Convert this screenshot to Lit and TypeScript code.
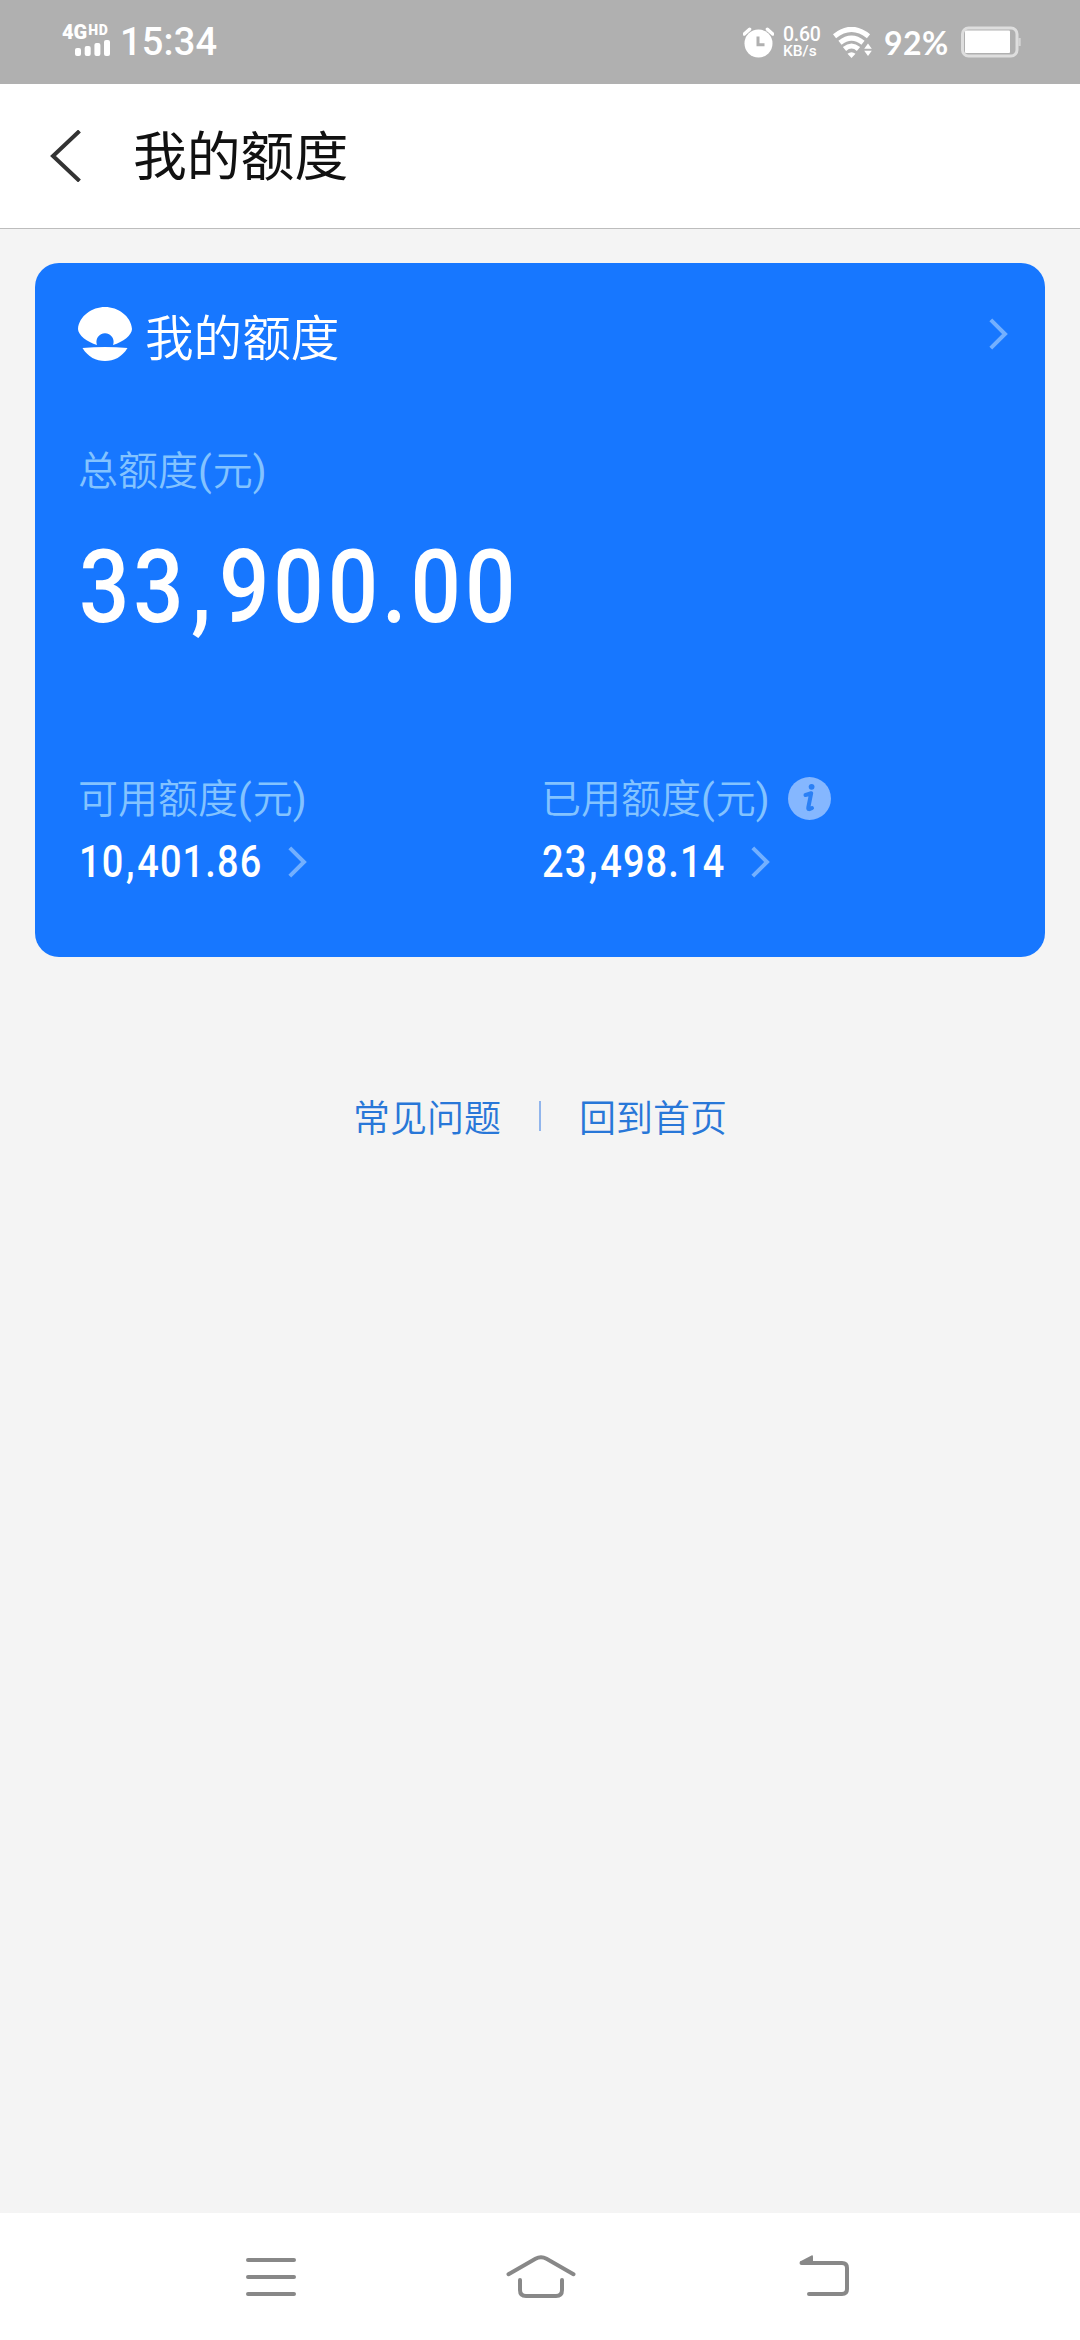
import { LitElement, html, css } from "lit";
import { customElement, property } from "lit/decorators.js";

@customElement("chevron-icon")
class ChevronIcon extends LitElement {
  static styles = css`
    :host { display: block; width: 19px; height: 32px; }
    svg { display: block; }
  `;
  render() {
    return html`<svg width="19" height="32" viewBox="0 0 19 32" fill="none">
      <path d="M1.8 1.8 L16 16 L1.8 30.2" stroke="#73b0ff" stroke-width="4" />
    </svg>`;
  }
}

@customElement("money-amount")
class MoneyAmount extends LitElement {
  @property() value = "";
  static styles = css`
    :host { display: block; white-space: nowrap; letter-spacing: 0.03em; }
    .digits {
      display: block;
      width: max-content;
      font-family: Roboto, "Liberation Sans", sans-serif;
      font-weight: 550;
      line-height: 1;
      transform: scaleX(0.87);
      transform-origin: 0 50%;
    }
    .comma { margin-left: 0.04em; margin-right: 0.045em; }
  `;
  render() {
    const [head, tail] = this.value.split(",");
    return html`<span class="digits">${head}<span class="comma">,</span>${tail}</span>`;
  }
}

@customElement("status-bar")
class StatusBar extends LitElement {
  static styles = css`
    :host {
      display: flex; height: 84px; background: #b0b0b0; color: #fff;
      font-family: Roboto, sans-serif; box-sizing: border-box; padding-left: 62px;
    }
    svg { display: block; flex: none; }
    .signal { width: 50px; padding-top: 24px; }
    .net { display: flex; align-items: flex-start; height: 16px; font-weight: 900; line-height: 16px; font-size: 20px; }
    .hd { margin-left: 1px; font-size: 14px; line-height: 12px; letter-spacing: 0.6px; font-weight: 900; }
    .bars { margin: 0 0 0 13px; }
    .time { width: 630px; padding-left: 8px; font-size: 38px; line-height: 85px; font-weight: 500; letter-spacing: 0.2px; }
    .alarm { margin: 27px 9px 0 -7px; }
    .speed { width: 50px; padding-top: 25px; font-weight: 500; }
    .rate { font-size: 19.5px; line-height: 19px; letter-spacing: -0.3px; }
    .unit { font-size: 15.5px; line-height: 15px; }
    .wifi { margin-top: 27px; }
    .pct { width: 77px; padding-left: 11px; font: 700 32px/86px Lato, sans-serif; letter-spacing: 0.4px; box-sizing: border-box; width: 88px; }
    .battery { margin-top: 26px; }
  `;
  render() {
    return html`
      <div class="signal">
        <div class="net"><span>4G</span><span class="hd">HD</span></div>
        <svg class="bars" width="36" height="16" viewBox="0 0 36 16" fill="#fff">
          <rect x="0" y="8" width="6" height="8" rx="2" /><rect x="9.7" y="6" width="6" height="10" rx="2" />
          <rect x="19.4" y="3" width="6" height="13" rx="2" /><rect x="29" y="0" width="6" height="16" rx="2" />
        </svg>
      </div>
      <div class="time">15:34</div>
      <svg class="alarm" width="31" height="31" viewBox="0 0 31 31">
        <circle cx="15.5" cy="16.5" r="14" fill="#fff" />
        <path d="M1.3 7 L6.6 2.2 M29.7 7 L24.4 2.2" stroke="#fff" stroke-width="3.4" stroke-linecap="round" />
        <path d="M15 9.5 V17.7 H21.5" fill="none" stroke="#b0b0b0" stroke-width="3" />
      </svg>
      <div class="speed"><div class="rate">0.60</div><div class="unit">KB/s</div></div>
      <svg class="wifi" width="40" height="32" viewBox="0 0 40 32">
        <g fill="none" stroke="#fff" stroke-width="5">
          <path d="M1.5 9.2 Q18.5 -4.6 35.5 9.2" /><path d="M7 15.8 Q18.5 6.4 30 15.8" /><path d="M11.5 22 Q18.5 16 25.5 22" />
        </g>
        <path d="M14.5 26.8 Q18.5 23.6 22.5 26.8 L18.5 31 Z M35 16.5 L38.8 21.8 H31.2 Z M35 29 L31.2 23.8 H38.8 Z" fill="#fff" />
      </svg>
      <div class="pct">92%</div>
      <svg class="battery" width="60" height="32" viewBox="0 0 60 32">
        <rect x="1.5" y="2" width="54.5" height="28" rx="6" fill="none" stroke="#dedede" stroke-width="3" />
        <rect x="4" y="4.5" width="45" height="22.5" rx="1" fill="#fff" />
        <path d="M58.5 12 V20" stroke="#d4d4d4" stroke-width="2.4" />
      </svg>`;
  }
}

@customElement("app-root")
class AppRoot extends LitElement {
  static styles = css`
    :host {
      display: flex; flex-direction: column; width: 1080px; height: 2340px;
      background: #f4f4f4; overflow: hidden;
      font-family: "Noto Sans CJK SC", sans-serif;
    }
    svg { display: block; flex: none; }
    .header {
      display: flex; align-items: center; height: 144px; padding-left: 50px;
      background: #fff; border-bottom: 1px solid #bdbdbd;
    }
    .title { margin: 0 0 7px 51px; font-size: 53.8px; line-height: 80px; color: #111; }
    .card {
      display: flex; flex-direction: column; box-sizing: border-box;
      margin: 34px 35px 0; height: 694px; padding: 43px 37px 0 43px;
      border-radius: 24px; background: #1777ff; color: #fff;
    }
    .card-head { display: flex; align-items: center; height: 56px; }
    .card-title { margin: 2px auto 0 13px; font-size: 48.6px; line-height: 60px; font-weight: 350; }
    .label { display: flex; align-items: center; font-size: 40px; line-height: 48px; height: 48px; font-weight: 350; color: #83c3ff; }
    .latin { font-family: Roboto, sans-serif; font-weight: 400; letter-spacing: 1px; }
    .total-label { margin-top: 84px; }
    .total { margin: 42px 0 0 1px; height: 102px; font-size: 102px; letter-spacing: 0.044em; }
    .columns { display: grid; grid-template-columns: 463px 1fr; margin-top: 136px; }
    .line { display: flex; align-items: center; height: 44px; margin-top: 18px; }
    .sum { box-sizing: border-box; width: 210px; height: 44px; padding: 1px 0 0 1px; font-size: 43.6px; }
    .info { margin-left: 17px; }
    .links { display: flex; align-items: center; justify-content: center; margin-top: 133px; height: 52px; font-size: 37px; line-height: 52px; font-weight: 350; color: #2877d8; }
    .rule { width: 2px; height: 30px; margin: 0 38px; background: #91b5ec; }
    .nav { display: flex; height: 127px; margin-top: auto; background: #fff; }
    .menu { margin: 45px 0 0 246px; }
    .home { margin: 41px 0 0 210px; }
    .back { margin: 41px 0 0 221px; }
  `;
  private label(text: string) {
    return html`<span>${text}<span class="latin">(</span>元<span class="latin">)</span></span>`;
  }
  render() {
    return html`
      <status-bar></status-bar>
      <div class="header">
        <svg width="32" height="52" viewBox="0 0 32 52" fill="none"><path d="M29.5 1 L3 26 L29.5 51" stroke="#333" stroke-width="4" /></svg>
        <div class="title">我的额度</div>
      </div>
      <div class="card">
        <div class="card-head">
          <svg width="54" height="54" viewBox="0 0 54 54" fill="#fff">
            <path d="M19 38 C9 35 0 28 0 22 C1 9 14 0 27 0 C40 0 53 9 54 22 C54 28 45 35 35 38 A8.6 8.6 0 1 0 19 38 Z" />
            <path d="M4.5 41 Q27 39 49.5 41 C44 50 36 54 27 54 C18 54 10 50 4.5 41 Z" />
          </svg>
          <div class="card-title">我的额度</div>
          <chevron-icon></chevron-icon>
        </div>
        <div class="label total-label">${this.label("总额度")}</div>
        <money-amount class="total" value="33,900.00"></money-amount>
        <div class="columns">
          <div>
            <div class="label">${this.label("可用额度")}</div>
            <div class="line"><money-amount class="sum" value="10,401.86"></money-amount><chevron-icon></chevron-icon></div>
          </div>
          <div>
            <div class="label">${this.label("已用额度")}
              <svg class="info" width="43" height="43" viewBox="0 0 43 43">
                <circle cx="21.5" cy="21.5" r="21.5" fill="#85b7ff" />
                <circle cx="23.6" cy="9.8" r="2.9" fill="#2b80f5" />
                <path d="M17.5 18 Q20 17.5 23.2 16.2 L20.3 30.5 Q19.8 33.5 24 31" fill="none" stroke="#2b80f5" stroke-width="4" stroke-linecap="round" stroke-linejoin="round" />
              </svg>
            </div>
            <div class="line"><money-amount class="sum" value="23,498.14"></money-amount><chevron-icon></chevron-icon></div>
          </div>
        </div>
      </div>
      <div class="links"><span>常见问题</span><span class="rule"></span><span>回到首页</span></div>
      <div class="nav">
        <svg class="menu" width="50" height="40" viewBox="0 0 50 40"><path d="M2 2 H48 M2 19 H48 M2 36 H48" stroke="#888" stroke-width="4" stroke-linecap="round" /></svg>
        <svg class="home" width="72" height="46" viewBox="0 0 72 46" fill="none" stroke="#888" stroke-width="4" stroke-linecap="round">
          <path d="M2.5 20.2 L29.5 4.7 Q35 1.7 40.5 4.7 L67.5 20.2" />
          <path d="M14 26 V36 Q14 42 20 42 H50 Q56 42 56 36 V26" />
        </svg>
        <svg class="back" width="52" height="46" viewBox="0 0 52 46">
          <path d="M2.5 9 H43 Q48 9 48 14 V35 Q48 40 43 40 H10" fill="none" stroke="#888" stroke-width="4" stroke-linecap="round" />
          <path d="M1 7.6 L12.5 1.4 Q14 1 14 2.6 V9 H2 Z" fill="#888" />
        </svg>
      </div>`;
  }
}
